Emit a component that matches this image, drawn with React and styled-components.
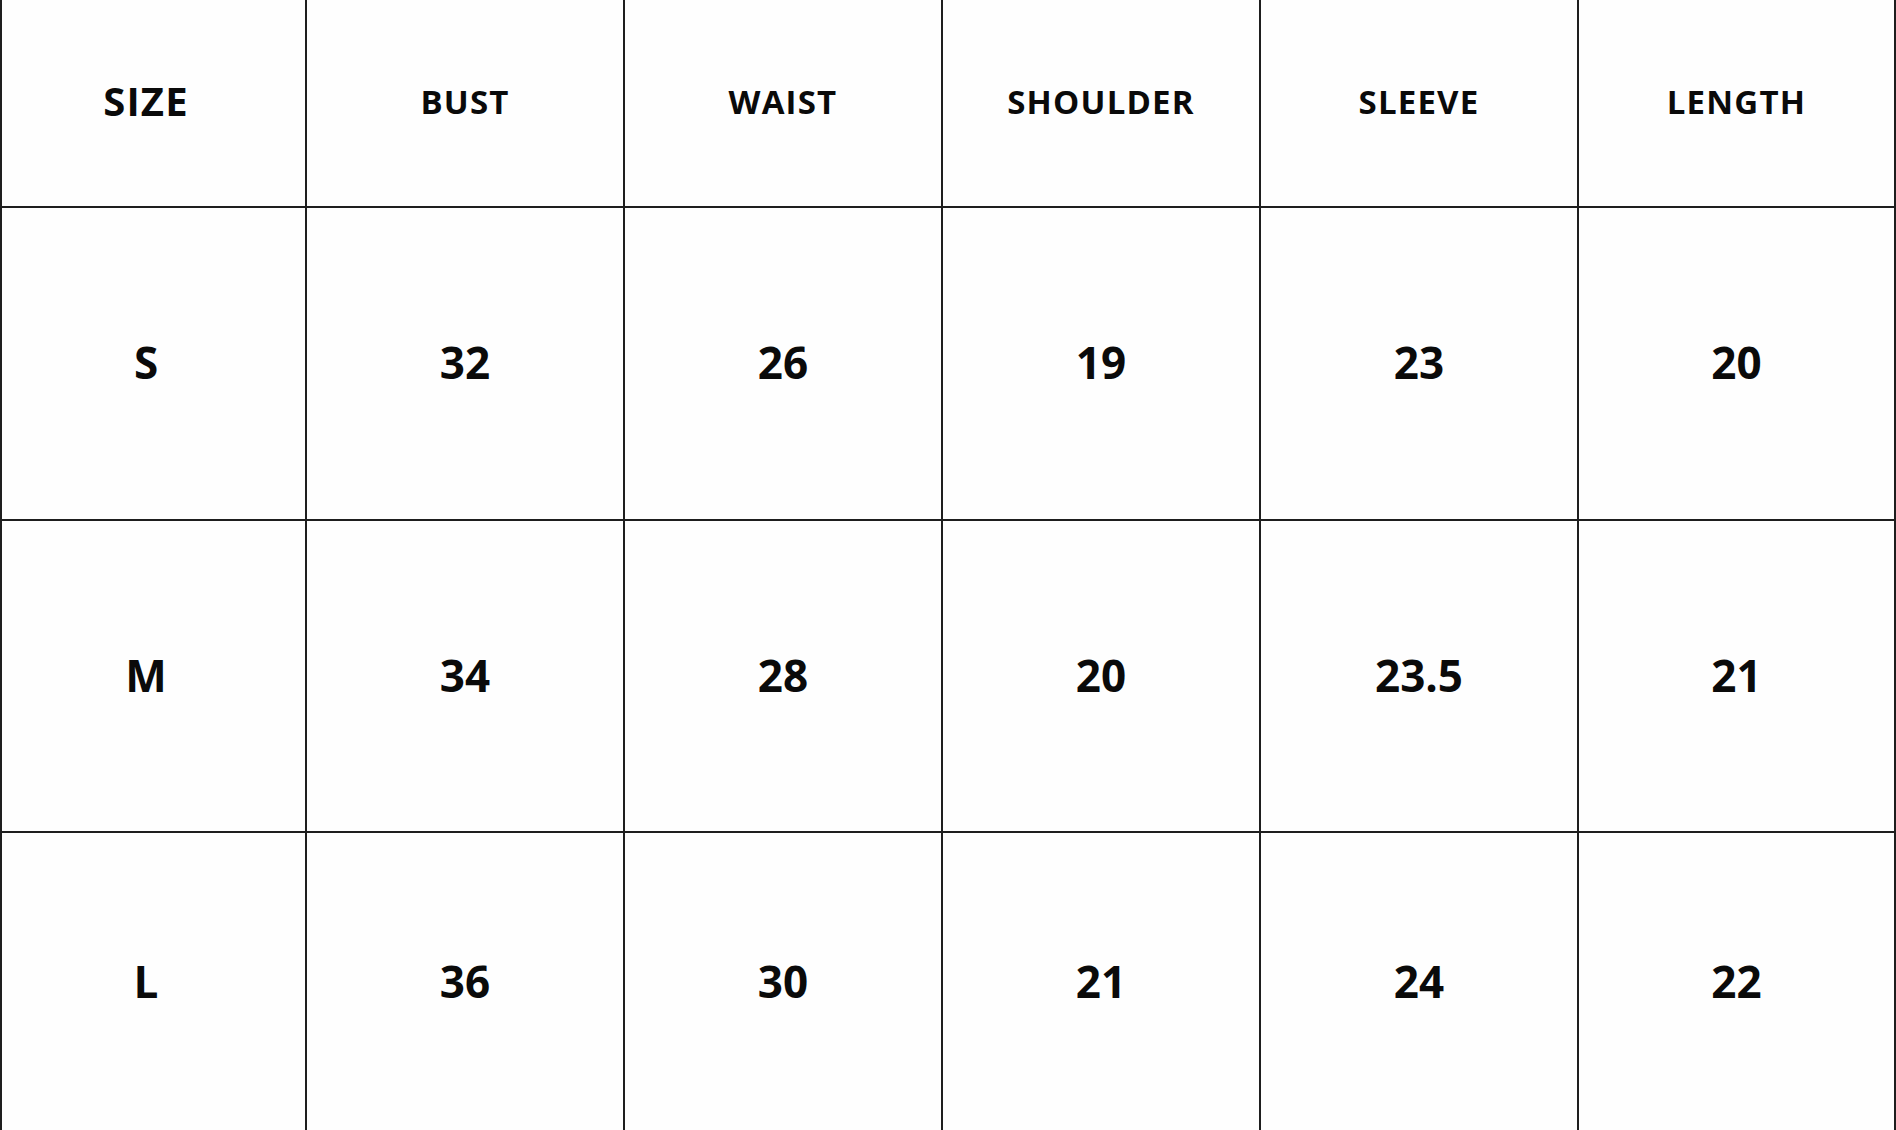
import React from "react";
import styled, { createGlobalStyle } from "styled-components";

const GlobalStyle = createGlobalStyle`
  html, body {
    margin: 0;
    padding: 0;
    background: #fefefe;
    overflow: hidden;
  }
  body {
    font-family: "Open Sans", "Liberation Sans", sans-serif;
  }
`;

const Chart = styled.div`
  display: grid;
  grid-template-columns: 305px repeat(4, 318px) 317px;
  grid-template-rows: 208px 313px 312px 300px;
  width: 1896px;
  box-sizing: border-box;
  border-left: 2px solid #1e1e1e;
  background: #fefefe;
`;

const Cell = styled.div`
  box-sizing: border-box;
  display: flex;
  align-items: center;
  justify-content: center;
  border-right: 2px solid #1e1e1e;
  border-bottom: 2px solid #1e1e1e;
  color: #0a0a0a;
  font-family: "Open Sans", "Liberation Sans", sans-serif;
  font-weight: 700;
  font-size: ${(p) => (p.$variant === "corner" ? "40px" : p.$variant === "head" ? "33px" : "44px")};
  letter-spacing: ${(p) => (p.$variant === "value" ? "0" : "1.2px")};
  padding-bottom: ${(p) => (p.$variant === "value" ? "3px" : "4px")};
  padding-right: ${(p) => (p.$first ? "15px" : "0")};
  line-height: 1;
`;

const headers = ["BUST", "WAIST", "SHOULDER", "SLEEVE", "LENGTH"];
const rows = [
  ["S", "32", "26", "19", "23", "20"],
  ["M", "34", "28", "20", "23.5", "21"],
  ["L", "36", "30", "21", "24", "22"],
];

export default function App() {
  return (
    <>
      <GlobalStyle />
      <Chart>
        <Cell $variant="corner" $first>
          SIZE
        </Cell>
        {headers.map((h) => (
          <Cell key={h} $variant="head">
            {h}
          </Cell>
        ))}
        {rows.map((r) =>
          r.map((v, i) => (
            <Cell key={r[0] + i} $variant="value" $first={i === 0}>
              {v}
            </Cell>
          ))
        )}
      </Chart>
    </>
  );
}
